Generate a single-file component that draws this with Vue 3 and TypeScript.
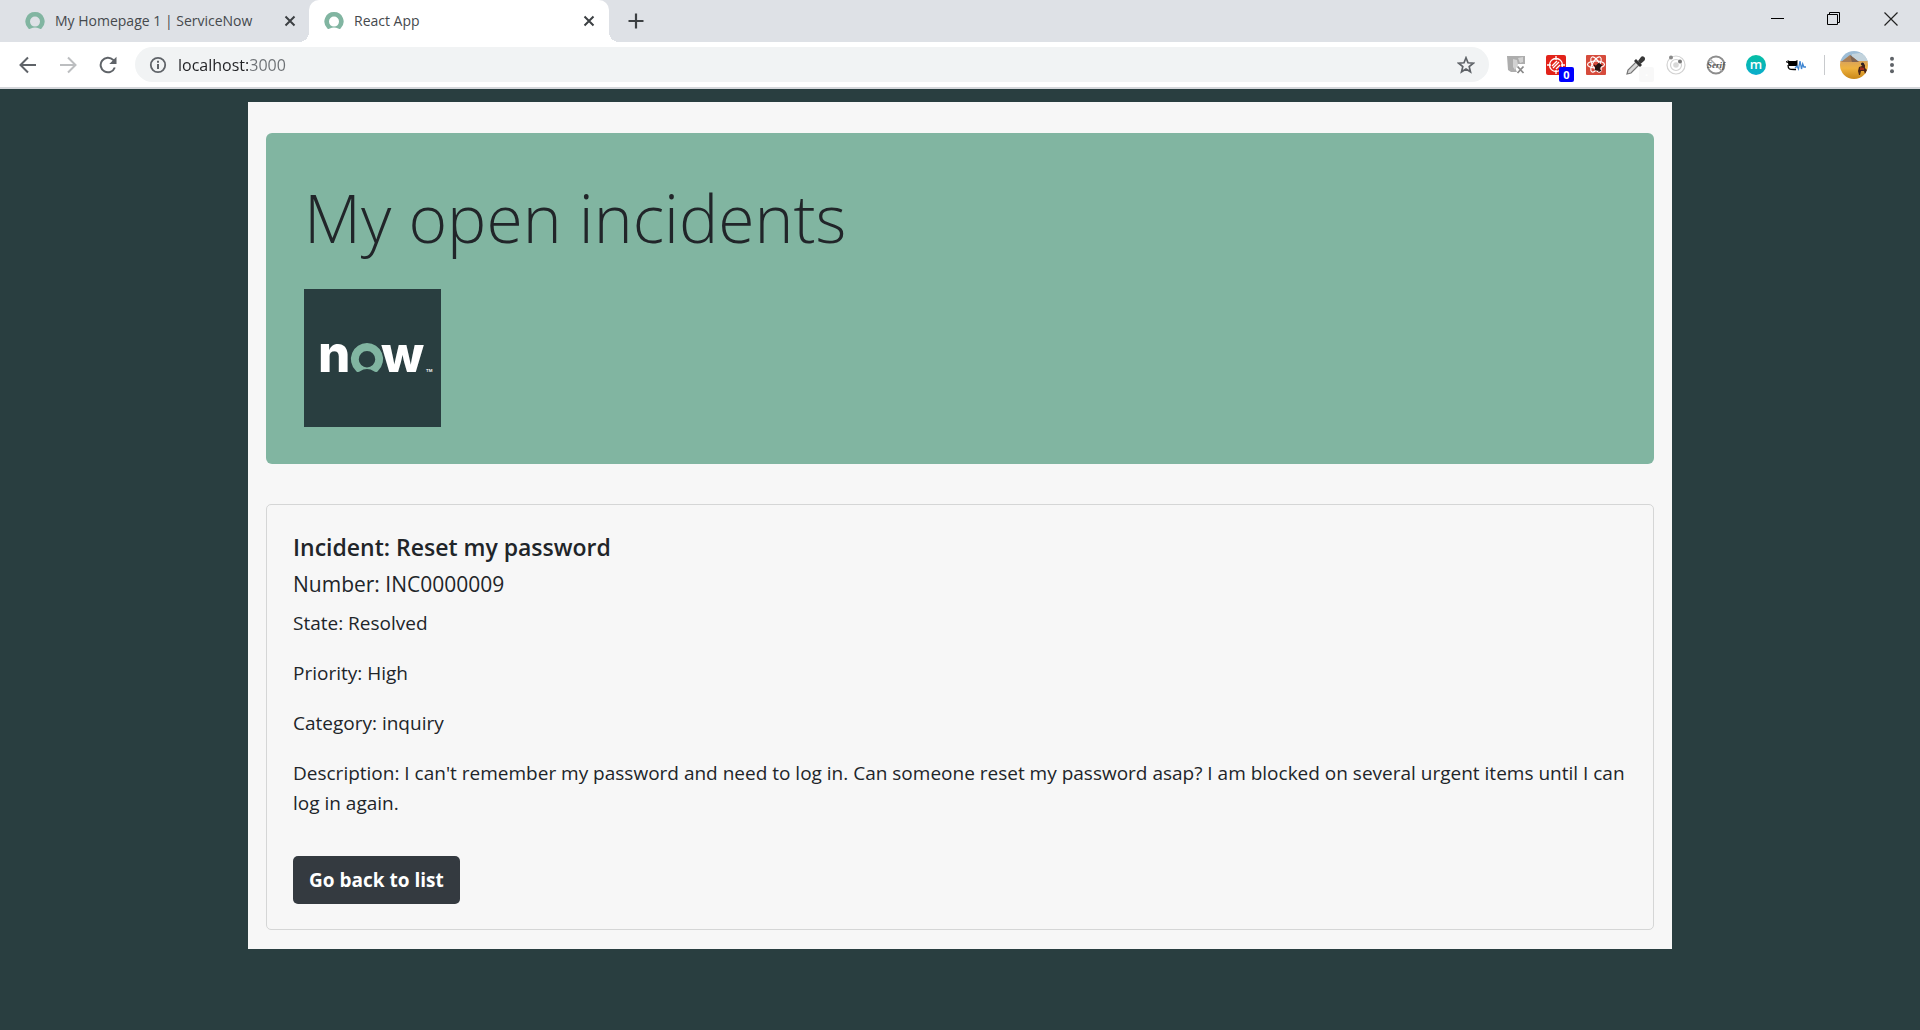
<script setup lang="ts">
import { ref } from 'vue'

interface Tab {
  title: string
  active: boolean
}

interface Incident {
  title: string
  number: string
  state: string
  priority: string
  category: string
  description: string
}

const tabs: Tab[] = [
  { title: 'My Homepage 1 | ServiceNow', active: false },
  { title: 'React App', active: true },
]

const address = ref('localhost:3000')

const incident: Incident = {
  title: 'Reset my password',
  number: 'INC0000009',
  state: 'Resolved',
  priority: 'High',
  category: 'inquiry',
  description:
    "I can't remember my password and need to log in. Can someone reset my password asap? I am blocked on several urgent items until I can log in again.",
}
</script>

<template>
  <div class="browser">
    <header class="chrome">
      <div class="tab-strip">
        <div v-for="tab in tabs" :key="tab.title" class="tab" :class="{ active: tab.active }">
          <svg class="favicon" viewBox="0 0 20 20" width="20" height="20">
            <path fill="#81b5a1" fill-rule="evenodd" d="M10 1a9.5 9.5 0 0 0-6.6 16.4c.7.7 1.6.7 2.4.2 2.600-1.500 5.800-1.500 8.400 0 .8.5 1.700.5 2.400-.2A9.500 9.500 0 0 0 10 1zM10 5.600a5 5 0 1 1 0 10 5 5 0 0 1 0-10z" />
          </svg>
          <span class="tab-title">{{ tab.title }}</span>
          <button class="icon-button tab-close" type="button" aria-label="Close tab">
            <svg viewBox="0 0 12 12" width="12" height="12"><path d="M1.500 1.500l9 9M10.500 1.500l-9 9" stroke="#3c4043" stroke-width="2" fill="none" /></svg>
          </button>
        </div>
        <button class="icon-button new-tab" type="button" aria-label="New tab">
          <svg viewBox="0 0 16 16" width="16" height="16"><path d="M8 .500v15M.500 8h15" stroke="#3c4043" stroke-width="2.200" fill="none" /></svg>
        </button>
        <div class="window-controls">
          <button class="icon-button" type="button" aria-label="Minimize">
            <svg viewBox="0 0 14 14" width="14" height="14"><path d="M1 6.500h13" stroke="#000" fill="none" /></svg>
          </button>
          <button class="icon-button" type="button" aria-label="Restore">
            <svg viewBox="0 0 14 14" width="14" height="14"><path d="M.500 2.500h10v10h-10zM2.500 2.500v-2h10v10h-2" stroke="#000" fill="none" /></svg>
          </button>
          <button class="icon-button" type="button" aria-label="Close window">
            <svg viewBox="0 0 14 14" width="14" height="14"><path d="M.500 .500l13 13M13.500 .500l-13 13" stroke="#222" stroke-width="1.200" fill="none" /></svg>
          </button>
        </div>
      </div>

      <div class="toolbar">
        <div class="navigation">
          <button class="icon-button" type="button" aria-label="Back">
            <svg viewBox="0 0 18 18" width="18" height="18"><path d="M17 9H2M9 1.500L1.500 9 9 16.500" stroke="#5f6368" stroke-width="2" fill="none" /></svg>
          </button>
          <button class="icon-button" type="button" aria-label="Forward">
            <svg viewBox="0 0 18 18" width="18" height="18"><path d="M1 9h15M9 1.500L16.500 9 9 16.500" stroke="#bcbec0" stroke-width="2" fill="none" /></svg>
          </button>
          <button class="icon-button" type="button" aria-label="Reload">
            <svg viewBox="0 0 18 18" width="18" height="18">
              <path d="M15.800 11.500A7.300 7.300 0 1 1 14.200 3.900L16 5.800" stroke="#5f6368" stroke-width="2" fill="none" />
              <path d="M17.500 .800v7.200h-7.200z" fill="#5f6368" />
            </svg>
          </button>
        </div>

        <div class="omnibox">
          <svg viewBox="0 0 18 18" width="18" height="18">
            <circle cx="9" cy="9" r="7.200" stroke="#5f6368" stroke-width="1.800" fill="none" />
            <path d="M9 8v5M9 4.800v2" stroke="#5f6368" stroke-width="2" />
          </svg>
          <input v-model="address" class="address" type="text" aria-label="Address" />
          <button class="icon-button" type="button" aria-label="Bookmark this page">
            <svg viewBox="0 0 18 18" width="18" height="18"><path d="M9 1.800l2 5 5.300.400-4.100 3.400 1.300 5.200L9 13l-4.500 2.800 1.300-5.200-4.100-3.400L7 6.800z" stroke="#5f6368" stroke-width="1.700" fill="none" /></svg>
          </button>
        </div>

        <div class="extensions">
          <button class="icon-button" type="button" aria-label="Page capture">
            <svg viewBox="0 0 20 20" width="20" height="20">
              <path d="M1 1h18v8h-9v6l1 2H5l-3-2z" fill="#adadad" />
              <path d="M7 4l4 1 1 5-3 5-2-3zM12 3l5-1v5l-3 1z" fill="#d2d2d2" />
              <path d="M11.500 11.500l6 6.500M17.500 11.500l-6 6.500" stroke="#8a8a8a" stroke-width="1.800" />
            </svg>
          </button>
          <button class="icon-button" type="button" aria-label="Blocked requests">
            <svg viewBox="0 0 20 20" width="20" height="20">
              <rect width="20" height="20" rx="2" fill="#e2231a" />
              <circle cx="10" cy="10" r="6.500" stroke="#fff" stroke-width="1.300" fill="none" />
              <path d="M10 1v4M10 15v4M1 10h4M15 10h4M6 11l5-5M7 13l6-6M10 14l4-4" stroke="#fff" stroke-width="1.300" />
            </svg>
            <span class="badge">0</span>
          </button>
          <button class="icon-button" type="button" aria-label="React Developer Tools">
            <svg viewBox="0 0 20 20" width="20" height="20">
              <rect width="20" height="20" rx="1" fill="#d64b3c" />
              <g stroke="#fff" stroke-width="1.100" fill="none">
                <ellipse cx="10" cy="9.500" rx="8.500" ry="3.500" />
                <ellipse cx="10" cy="9.500" rx="8.500" ry="3.500" transform="rotate(60 10 9.500)" />
                <ellipse cx="10" cy="9.500" rx="8.500" ry="3.500" transform="rotate(120 10 9.500)" />
              </g>
              <ellipse cx="12" cy="12" rx="2.400" ry="4" fill="#241312" transform="rotate(35 12 12)" />
              <path d="M8 10l7 6M9 15l7-5M13 8v9" stroke="#241312" stroke-width="1.100" />
            </svg>
          </button>
          <button class="icon-button" type="button" aria-label="Color picker">
            <svg viewBox="0 0 20 20" width="20" height="20">
              <path d="M1 19l1-4 8-8 3 3-8 8z" fill="#d8d8d8" stroke="#777" stroke-width="1.200" />
              <path d="M9 5l6 6" stroke="#333" stroke-width="2.800" />
              <path d="M12 6l3-4c1.500-1.800 5.500.500 3.500 3.500L14.500 9z" fill="#383838" />
            </svg>
            <span class="badge faint">·</span>
          </button>
          <button class="icon-button" type="button" aria-label="Orbit">
            <svg viewBox="0 0 20 20" width="20" height="20">
              <circle cx="10" cy="10" r="9" stroke="#d2d2d2" stroke-width="1.200" fill="none" />
              <circle cx="10" cy="10" r="5.500" stroke="#d2d2d2" stroke-width="1.200" fill="none" />
              <circle cx="10" cy="10" r="2.800" fill="#d8d8d8" />
              <circle cx="5" cy="2.500" r="2" fill="#888" /><circle cx="14" cy="6.500" r="2" fill="#777" />
            </svg>
          </button>
          <button class="icon-button" type="button" aria-label="Serif finder">
            <svg viewBox="0 0 20 20" width="20" height="20">
              <circle cx="10" cy="10" r="8.500" stroke="#8d8d8d" stroke-width="1.800" fill="none" />
              <path d="M4 4l12 12" stroke="#aaa" stroke-width="1.500" />
              <text x="10" y="13" text-anchor="middle" font-family="Liberation Serif, serif" font-size="9" font-style="italic" font-weight="700" fill="#555">Serif</text>
            </svg>
          </button>
          <button class="icon-button" type="button" aria-label="Momentum">
            <svg viewBox="0 0 20 20" width="20" height="20">
              <defs><linearGradient id="teal" x1="0" y1="0" x2="0" y2="1"><stop offset="0" stop-color="#06bfa4" /><stop offset="1" stop-color="#0aaccd" /></linearGradient></defs>
              <circle cx="10" cy="10" r="10" fill="url(#teal)" />
              <text x="10" y="14" text-anchor="middle" font-family="Open Sans, sans-serif" font-size="13" font-weight="600" fill="#fff">m</text>
            </svg>
          </button>
          <button class="icon-button" type="button" aria-label="Activity cat">
            <svg viewBox="0 0 20 20" width="20" height="20">
              <path d="M1.500 5l2 1h6l2-1v6H2.500z" fill="#000" />
              <path d="M2 10c0 5 2 4.500 8 4.500M0 6.500l2 1" stroke="#000" stroke-width="1.300" fill="none" />
              <path d="M9 13l2-2 1.500 3L14 6l1.500 8 1.200-5 1.200 3H20" stroke="#3f86d2" stroke-width="1.300" fill="none" />
            </svg>
          </button>
        </div>

        <div class="profile">
          <button class="icon-button" type="button" aria-label="Profile">
            <svg viewBox="0 0 28 28" width="28" height="28">
              <defs>
                <clipPath id="round"><circle cx="14" cy="14" r="14" /></clipPath>
                <linearGradient id="sand" x1="0" y1="0" x2="0" y2="1"><stop offset="0" stop-color="#d9a35c" /><stop offset=".4" stop-color="#eeb23e" /><stop offset="1" stop-color="#c98718" /></linearGradient>
              </defs>
              <g clip-path="url(#round)">
                <rect width="28" height="11" fill="#9dbdd6" />
                <path d="M12 3l8-1 8 4v5H12z" fill="#c3d3dc" />
                <rect y="10" width="28" height="18" fill="url(#sand)" />
                <path d="M1 11l9-7 9 7z" fill="#a97e55" />
                <path d="M10 4l9 7h-7z" fill="#7e6350" />
                <path d="M18 20l1-4 3-1 1-3 2 2v3l2 2-1 4h-1l-1-3-3 0-1 4h-1z" fill="#4a2418" />
                <circle cx="22.500" cy="13" r="1.600" fill="#2d2226" />
                <path d="M20 16l4 1v2h-4z" fill="#a02c1c" />
              </g>
            </svg>
          </button>
          <button class="icon-button" type="button" aria-label="Menu">
            <svg viewBox="0 0 18 18" width="18" height="18"><g fill="#5f6368"><circle cx="9" cy="2.800" r="2" /><circle cx="9" cy="9" r="2" /><circle cx="9" cy="15.200" r="2" /></g></svg>
          </button>
        </div>
      </div>
    </header>

    <main class="container">
      <section class="jumbotron">
        <h1>My open incidents</h1>
        <svg class="logo" viewBox="0 0 137 138" width="137" height="138" role="img" aria-label="now">
          <rect width="137" height="138" fill="#293e40" />
          <text x="14" y="83" font-family="Inter, sans-serif" font-size="51" font-weight="800" fill="#fff">n</text>
          <text x="77" y="83" font-family="Inter, sans-serif" font-size="50" font-weight="800" fill="#fff">w</text>
          <path fill="#81b5a1" fill-rule="evenodd" d="M63 54a16 16 0 0 0-11.300 27.400c1.100 1.700 2.800 2 4.400.800a11.500 11.500 0 0 1 13.800 0c1.600 1.200 3.300.900 4.400-.8A16 16 0 0 0 63 54zM63 62a8 8 0 1 1 0 16.500A8 8 0 0 1 63 62z" />
          <text x="122" y="83" font-family="Inter, sans-serif" font-size="4" font-weight="600" fill="#fff">TM</text>
        </svg>
      </section>

      <article class="card">
        <h2>Incident: {{ incident.title }}</h2>
        <h3>Number: {{ incident.number }}</h3>
        <p>State: {{ incident.state }}</p>
        <p>Priority: {{ incident.priority }}</p>
        <p>Category: {{ incident.category }}</p>
        <p>Description: {{ incident.description }}</p>
        <button class="back-button" type="button">Go back to list</button>
      </article>
    </main>
  </div>
</template>

<style>
body {
  margin: 0;
  background: #293e40;
}
</style>

<style scoped>
.browser {
  color: #212529;
  font-family: "Open Sans", "Noto Sans", sans-serif;
  font-size: 19px;
  line-height: 30px;
}

.browser * {
  box-sizing: border-box;
}

svg {
  display: block;
  flex: none;
}

.icon-button {
  position: relative;
  display: flex;
  align-items: center;
  justify-content: center;
  flex: none;
  padding: 0;
  border: 0;
  background: none;
}

.chrome {
  border-bottom: 2px solid #d5d7db;
  background: #fff;
}

.tab-strip {
  display: flex;
  height: 42px;
  background: #dee1e6;
}

.tab {
  position: relative;
  display: flex;
  align-items: center;
  width: 300px;
  padding: 0 14px 0 15px;
  color: #45494d;
  font-size: 14px;
  line-height: 20px;
}

.tab:first-child {
  width: 309px;
  padding: 0 13px 0 25px;
}

.tab.active {
  border-radius: 10px 10px 0 0;
  background: #fff;
}

.tab.active::before,
.tab.active::after {
  content: "";
  position: absolute;
  bottom: 0;
  width: 10px;
  height: 10px;
}

.tab.active::before {
  right: 100%;
  background: radial-gradient(circle at 0 0, transparent 10px, #fff 10px);
}

.tab.active::after {
  left: 100%;
  background: radial-gradient(circle at 100% 0, transparent 10px, #fff 10px);
}

.tab-title {
  flex: 1;
  padding-left: 10px;
  white-space: nowrap;
}

.new-tab {
  width: 54px;
}

.window-controls {
  display: flex;
  margin-left: auto;
  padding: 0 1px 5px 0;
}

.window-controls .icon-button {
  width: 57px;
}

.toolbar {
  display: flex;
  align-items: center;
  height: 45px;
}

.navigation {
  display: flex;
  padding: 0 7px 0 8px;
}

.navigation .icon-button {
  width: 40px;
  height: 36px;
}

.omnibox {
  display: flex;
  align-items: center;
  flex: 1;
  height: 35px;
  padding: 0 14px;
  border-radius: 18px;
  background: #f1f3f4;
}

.address {
  flex: 1;
  min-width: 0;
  margin: 0 11px;
  padding: 0;
  border: 0;
  outline: 0;
  background: linear-gradient(90deg, #202124 70px, #6c7074 70px);
  background-clip: text;
  color: transparent;
  font: 16px/24px "Open Sans", "Noto Sans", sans-serif;
}

.extensions {
  display: flex;
  padding: 0 8px 0 7px;
}

.extensions .icon-button {
  width: 40px;
  height: 28px;
}

.badge {
  position: absolute;
  top: 16px;
  left: 23px;
  width: 15px;
  height: 15px;
  border-radius: 2px;
  background: #00f;
  color: #fff;
  font: 700 11px/15px "Open Sans", sans-serif;
}

.badge.faint {
  background: #f8f8f8;
}

.profile {
  display: flex;
  align-items: center;
  gap: 15px;
  padding-right: 19px;
}

.profile::before {
  content: "";
  width: 1px;
  height: 20px;
  background: #c8cacd;
}

.container {
  max-width: 1424px;
  margin: 13px auto 0;
  padding: 31px 18px 19px;
  background: #f7f7f7;
}

.jumbotron {
  padding: 42px 38px 37px;
  border-radius: 6px;
  background: #81b5a1;
}

h1 {
  margin: 0 0 30px;
  font-size: 66px;
  font-weight: 300;
  line-height: 84px;
}

.card {
  margin-top: 40px;
  padding: 26px 26px 25px;
  border: 1px solid #d5d6d6;
  border-radius: 5px;
}

h2 {
  margin: 0 0 6px;
  font-size: 23px;
  font-weight: 600;
  line-height: 32px;
}

h3 {
  margin: 0 0 9px;
  font-size: 21px;
  font-weight: 400;
  line-height: 30px;
}

p {
  margin: 0 0 20px;
}

p:last-of-type {
  margin-bottom: 38px;
}

.back-button {
  display: block;
  height: 48px;
  padding: 0 16px;
  border: 0;
  border-radius: 5px;
  background: #343a40;
  color: #fff;
  font: 700 19px/30px "Open Sans", "Noto Sans", sans-serif;
}
</style>
